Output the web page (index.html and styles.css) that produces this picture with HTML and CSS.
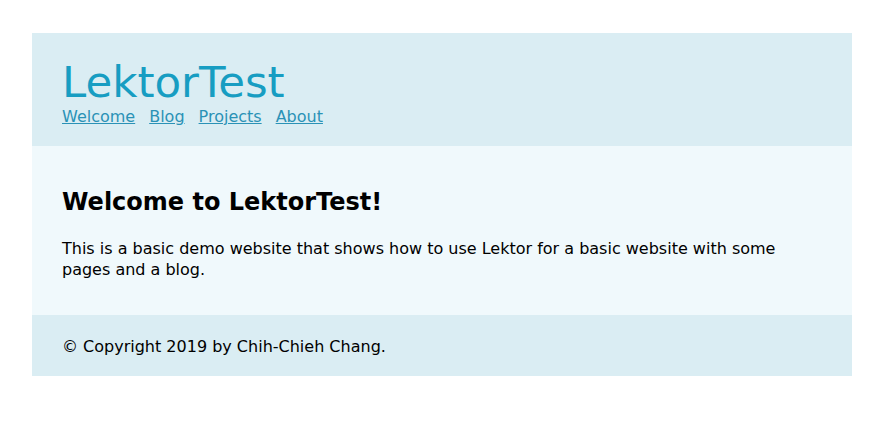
FILE: index.html
```html
<!DOCTYPE html>
<html lang="en">
<head>
<meta charset="utf-8">
<title>LektorTest</title>
<link rel="stylesheet" href="styles.css">
</head>
<body>
<div class="site">
  <header class="site-header">
    <h1 class="site-title">LektorTest</h1>
    <nav class="site-nav">
      <a href="#">Welcome</a>
      <a href="#">Blog</a>
      <a href="#">Projects</a>
      <a href="#">About</a>
    </nav>
  </header>
  <main class="page">
    <h2 class="page-title">Welcome to LektorTest!</h2>
    <p class="page-text">This is a basic demo website that shows how to use Lektor for a basic website with some pages and a blog.</p>
  </main>
  <footer class="site-footer">© Copyright 2019 by Chih-Chieh Chang.</footer>
</div>
</body>
</html>
```
FILE: styles.css
```css
html, body {
  margin: 0;
  padding: 0;
  background: #ffffff;
}
body {
  font-family: "DejaVu Sans", Verdana, sans-serif;
  font-size: 16px;
  color: #000;
}
.site {
  margin: 33px 20px 0 32px;
}
.site-header {
  background: #daedf3;
  padding: 25px 30px 19px 30px;
}
.site-title {
  margin: 0;
  font-size: 43.5px;
  line-height: 48px;
  font-weight: normal;
  color: #179dc2;
}
.site-nav {
  display: flex;
  gap: 14px;
  margin-top: 1px;
  line-height: 20px;
}
.site-nav a {
  color: #2a92b6;
  text-decoration: underline;
}
.page {
  display: block;
  background: #f0f9fc;
  padding: 42px 30px 35px 30px;
}
.page-title {
  margin: 0 0 22px 0;
  font-size: 24px;
  line-height: 28px;
  font-weight: bold;
}
.page-text {
  margin: 0;
  line-height: 21px;
}
.site-footer {
  background: #daedf3;
  padding: 21px 30px 19px 30px;
  line-height: 21px;
}
```
